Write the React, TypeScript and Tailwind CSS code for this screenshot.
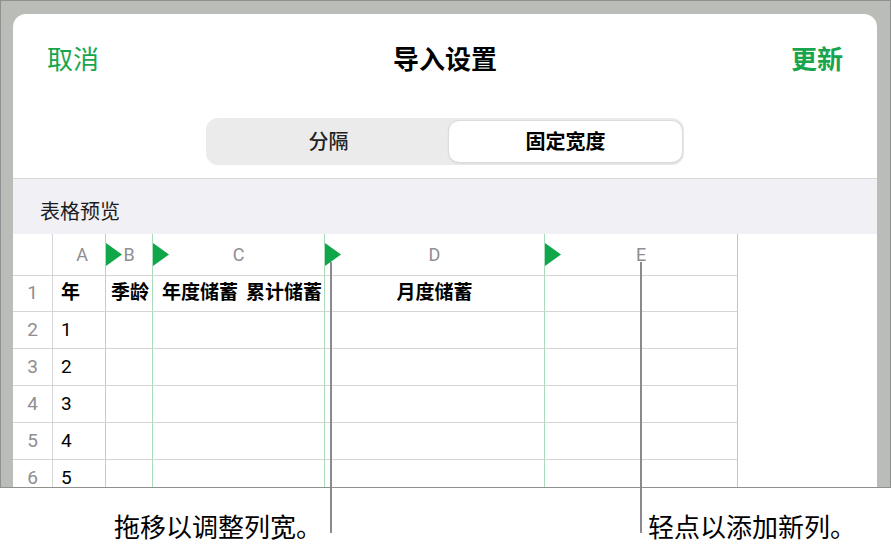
import React from 'react';

const GREEN_LINE = 'border-[#a9dcbb]';
const GRAY_LINE = 'border-[#d6d6d8]';

const columns = [
  { key: 'n', width: 'w-[40px]', line: GRAY_LINE },
  { key: 'A', width: 'w-[53px]', line: GREEN_LINE },
  { key: 'B', width: 'w-[47px]', line: GREEN_LINE },
  { key: 'C', width: 'w-[172px]', line: GREEN_LINE },
  { key: 'D', width: 'w-[220px]', line: GREEN_LINE },
  { key: 'E', width: 'w-[193px]', line: 'border-[#c4c4c6]' },
];

const rows = [
  ['1', '年', '季龄', '年度储蓄 累计储蓄', '月度储蓄', ''],
  ['2', '1', '', '', '', ''],
  ['3', '2', '', '', '', ''],
  ['4', '3', '', '', '', ''],
  ['5', '4', '', '', '', ''],
  ['6', '5', '', '', '', ''],
];

function Marker() {
  return (
    <svg className="absolute left-0 top-[9px]" width="16" height="23" viewBox="0 0 16 23">
      <polygon points="0,0 16,11.5 0,23" fill="#10a74b" />
    </svg>
  );
}

function HeaderRow() {
  return (
    <div className="flex h-[42px]">
      {columns.map((col, i) => (
        <div
          key={col.key}
          className={`relative flex items-center justify-center border-r border-b border-b-[#d6d6d8] ${col.width} ${col.line}`}
        >
          {i >= 2 && <Marker />}
          {i > 0 && <span className={`text-[18px] text-[#8e8e93] ${i === 1 ? 'pl-[6px]' : ''}`}>{col.key}</span>}
        </div>
      ))}
    </div>
  );
}

function DataRow({ cells, first }: { cells: string[]; first: boolean }) {
  return (
    <div className={`flex ${first ? 'h-[36px]' : 'h-[37px]'}`}>
      {columns.map((col, i) => {
        let align = 'justify-start';
        let pad = '';
        if (i === 0) align = 'justify-center';
        if (i === 1) pad = 'pl-[8px]';
        if (i === 2) pad = 'pl-[5px]';
        if (i === 3) pad = 'pl-[9px]';
        if (i === 4) align = 'justify-center';
        return (
          <div
            key={col.key}
            className={`flex items-center whitespace-nowrap overflow-hidden border-r border-b border-b-[#d6d6d8] ${col.width} ${col.line} ${align} ${pad}`}
          >
            <span
              className={
                i === 0
                  ? 'text-[19px] text-[#8e8e93]'
                  : first
                    ? 'text-[19px] font-bold text-black'
                    : 'text-[19px] text-black'
              }
            >
              {i === 3 && first ? (
                <>
                  年度储蓄<span className="inline-block w-[8px]" />累计储蓄
                </>
              ) : (
                cells[i]
              )}
            </span>
          </div>
        );
      })}
    </div>
  );
}

export default function App() {
  return (
    <div className="relative w-[891px] h-[553px] bg-white font-['Roboto','Noto_Sans_CJK_SC',sans-serif] overflow-hidden">
      <div className="h-[488px] bg-[#babcb8] border border-[#8f918e] pl-[12px] pt-[13px] pr-[13px] flex flex-col">
        <div className="flex-1 bg-white rounded-t-[13px] overflow-hidden flex flex-col">
          <div className="h-[92px] shrink-0 flex items-center px-[34px]">
            <div className="flex-1 text-[26px] text-[#17a64e]">取消</div>
            <div className="text-[26px] font-bold text-black">导入设置</div>
            <div className="flex-1 text-right text-[26px] font-bold text-[#17a64e]">更新</div>
          </div>

          <div className="shrink-0 pt-[12px] pb-[13px] flex justify-center">
            <div className="w-[478px] h-[47px] rounded-[12px] bg-[#ebebec] flex px-[2px] py-[3px]">
              <div className="flex-1 flex items-center justify-center text-[20px] font-medium text-[#222]">分隔</div>
              <div className="w-[233px] rounded-[10px] bg-white shadow-[0_0_0_1px_#dcdcdc,0_1px_3px_rgba(0,0,0,0.12)] flex items-center justify-center text-[20px] font-bold text-black">
                固定宽度
              </div>
            </div>
          </div>

          <div className="shrink-0 h-[56px] bg-[#f0f0f5] border-t border-[#d9d9dd] pl-[27px] pt-[21px]">
            <div className="text-[20px] leading-[24px] text-[#1c1c1e]">表格预览</div>
          </div>

          <div className="flex-1 overflow-hidden">
            <HeaderRow />
            {rows.map((r, i) => (
              <DataRow key={r[0]} cells={r} first={i === 0} />
            ))}
          </div>
        </div>
      </div>

      <div className="flex items-center h-[65px] pt-[14px] text-[26px] leading-[30px] text-black">
        <div className="w-[322px] text-right">拖移以调整列宽。</div>
        <div className="ml-[326px]">轻点以添加新列。</div>
      </div>

      <div className="absolute left-[330px] top-[262px] w-[2px] h-[271px] bg-[#8a8a8c]" />
      <div className="absolute left-[640px] top-[262px] w-[2px] h-[271px] bg-[#8a8a8c]" />
    </div>
  );
}
